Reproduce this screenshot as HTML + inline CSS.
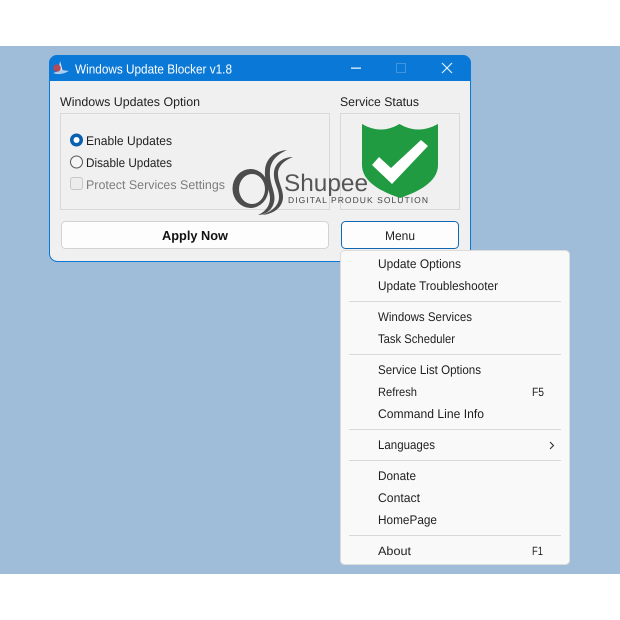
<!DOCTYPE html>
<html><head><meta charset="utf-8"><style>
html,body{margin:0;padding:0;background:#fff;width:620px;height:620px;overflow:hidden}
svg{display:block}
text{font-family:"Liberation Sans",sans-serif;font-size:12.5px;fill:#1f1f1f;text-rendering:geometricPrecision}
</style></head><body>
<svg width="620" height="620" viewBox="0 0 620 620" xmlns="http://www.w3.org/2000/svg">
<rect width="620" height="620" fill="#fff"/>
<rect y="46" width="620" height="528" fill="#9fbdd9"/>
<!-- window -->
<rect x="49.500" y="55.500" width="421" height="206" rx="8" fill="#f0f0f0" stroke="#0a78d4"/>
<path d="M49 81V63a8 8 0 0 1 8-8H463a8 8 0 0 1 8 8V81Z" fill="#0a78d7"/>
<!-- app icon -->
<path d="M53 73Q60 76 69 71L62 70Z" fill="#a9cdec"/>
<path d="M60 61L62.500 70L58.500 71Z" fill="#dfe8f2"/>
<circle cx="57" cy="68" r="3.800" fill="#b04a5c"/>
<text x="75" y="73.500" textLength="157" lengthAdjust="spacingAndGlyphs" style="fill:#fff;font-size:13px">Windows Update Blocker v1.8</text>
<!-- window controls -->
<rect x="351" y="67.500" width="10" height="1.300" fill="#eaf4fc"/>
<rect x="396.500" y="63.500" width="9" height="9" fill="none" stroke="#3f95e0"/>
<path d="M442 63L452 73M452 63L442 73" stroke="#eef6fd" stroke-width="1.100" fill="none"/>
<!-- labels -->
<text x="60" y="106" textLength="140" lengthAdjust="spacingAndGlyphs">Windows Updates Option</text>
<text x="340" y="106" textLength="79" lengthAdjust="spacingAndGlyphs">Service Status</text>
<!-- group boxes -->
<rect x="60.500" y="113.500" width="269" height="96" fill="none" stroke="#d9d9d9"/>
<rect x="340.500" y="113.500" width="119" height="96" fill="none" stroke="#d9d9d9"/>
<!-- radios -->
<circle cx="76.500" cy="140" r="6.500" fill="#0a5fb0"/>
<circle cx="76.500" cy="140" r="3" fill="#fff"/>
<text x="86" y="145" textLength="86" lengthAdjust="spacingAndGlyphs">Enable Updates</text>
<circle cx="76.500" cy="162" r="6" fill="#f5f5f5" stroke="#555"/>
<text x="86" y="167" textLength="86" lengthAdjust="spacingAndGlyphs">Disable Updates</text>
<rect x="70.500" y="177.500" width="12" height="12" rx="2.500" fill="#ececec" stroke="#c8c8c8"/>
<text x="86" y="189" textLength="139" lengthAdjust="spacingAndGlyphs" style="fill:#7d7d7d">Protect Services Settings</text>
<!-- shield -->
<path d="M362 124Q381 135 399.500 124Q418 135 438 124V165C438 182 418 192 400 198C382 192 362 182 362 165Z" fill="#209b41"/>
<path d="M372 165L379 157L391 168L421 140L428 146L392 184Z" fill="#fff"/>
<!-- buttons -->
<rect x="61.500" y="221.500" width="267" height="27" rx="4" fill="#fdfdfd" stroke="#d2d2d2"/>
<text x="162" y="240" textLength="66" lengthAdjust="spacingAndGlyphs" style="font-weight:bold;fill:#111;font-size:13px">Apply Now</text>
<rect x="341.500" y="221.500" width="117" height="27" rx="4" fill="#fdfdfd" stroke="#0f67b1"/>
<text x="385" y="240" textLength="30" lengthAdjust="spacingAndGlyphs">Menu</text>
<!-- logo -->
<g fill="#4c4c4c">
<path fill-rule="evenodd" d="M232.500 188.500a18 19.500 0 1 0 36 0a18 19.500 0 1 0 -36 0ZM239 189a13 15 0 1 0 26 0a13 15 0 1 0 -26 0Z"/>
<path d="M287 150C275 151 266 158 265 170C264 182 270 190 270 198C270 206 265 212 258 215C267 215 274.500 208 274.500 198C274.500 190 269 182 270 170C271 160 278 154 287 150Z"/>
<path d="M293 157C283 157 275 163 274 172C273 182 279 188 279 197C279 205 273 211 262 215C274 214 283 207 283 197C283 188 277.500 182 278 172C279 165 285 160 293 157Z"/>
</g>
<text x="284" y="191" textLength="84" lengthAdjust="spacingAndGlyphs" style="font-size:24px;fill:#555">Shupee</text>
<text x="288" y="203" textLength="140" style="font-size:8.500px;fill:#444">DIGITAL PRODUK SOLUTION</text>
<!-- menu -->
<rect x="340.500" y="250.500" width="229" height="314" rx="4" fill="#f9f9f9" stroke="#dcdcdc"/>
<g>
<text x="378" y="268" textLength="83" lengthAdjust="spacingAndGlyphs">Update Options</text>
<text x="378" y="290" textLength="120" lengthAdjust="spacingAndGlyphs">Update Troubleshooter</text>
<text x="378" y="321" textLength="94" lengthAdjust="spacingAndGlyphs">Windows Services</text>
<text x="378" y="343" textLength="77" lengthAdjust="spacingAndGlyphs">Task Scheduler</text>
<text x="378" y="374" textLength="103" lengthAdjust="spacingAndGlyphs">Service List Options</text>
<text x="378" y="396" textLength="39" lengthAdjust="spacingAndGlyphs" style="font-size:12px">Refresh</text>
<text x="532" y="396" textLength="12" lengthAdjust="spacingAndGlyphs" style="font-size:12px">F5</text>
<text x="378" y="418" textLength="106" lengthAdjust="spacingAndGlyphs">Command Line Info</text>
<text x="378" y="449" textLength="57" lengthAdjust="spacingAndGlyphs">Languages</text>
<text x="378" y="480" textLength="38" lengthAdjust="spacingAndGlyphs">Donate</text>
<text x="378" y="502" textLength="42" lengthAdjust="spacingAndGlyphs">Contact</text>
<text x="378" y="524" textLength="59" lengthAdjust="spacingAndGlyphs">HomePage</text>
<text x="378" y="555" textLength="33" lengthAdjust="spacingAndGlyphs" style="font-size:12px">About</text>
<text x="532" y="555" textLength="11" lengthAdjust="spacingAndGlyphs" style="font-size:12px">F1</text>
</g>
<path d="M550 442L553.500 445.500L550 449" fill="none" stroke="#333" stroke-width="1.100"/>
<g fill="#d9d9d9">
<rect x="349" y="301" width="212" height="1"/>
<rect x="349" y="354" width="212" height="1"/>
<rect x="349" y="429" width="212" height="1"/>
<rect x="349" y="460" width="212" height="1"/>
<rect x="349" y="535" width="212" height="1"/>
</g>
</svg>
</body></html>
